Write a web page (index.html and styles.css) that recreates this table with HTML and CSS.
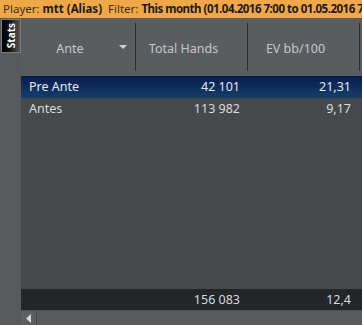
FILE: index.html
```html
<!DOCTYPE html>
<html>
<head>
<meta charset="utf-8">
<link rel="stylesheet" href="styles.css">
</head>
<body>
<div class="topbar">
  <span class="lbl">Player:</span> <b>mtt (Alias)</b>&nbsp;&nbsp;<span class="lbl">Filter:</span> <b class="flt">This month (01.04.2016 7:00 to 01.05.2016 7:00)</b>
</div>
<div class="main">
  <div class="side">
    <div class="tab"><span>Stats</span></div>
  </div>
  <div class="grid">
    <div class="head">
      <div class="hc c1"><span class="htxt">Ante</span><span class="arrow"></span></div>
      <div class="hc c2">Total Hands</div>
      <div class="hc c3">EV bb/100</div>
      <div class="hc c4"></div>
    </div>
    <div class="body">
      <div class="row sel">
        <div class="cell c1">Pre Ante</div>
        <div class="cell c2 num">42 101</div>
        <div class="cell c3 num">21,31</div>
      </div>
      <div class="row">
        <div class="cell c1">Antes</div>
        <div class="cell c2 num">113 982</div>
        <div class="cell c3 num">9,17</div>
      </div>
    </div>
    <div class="row total">
      <div class="cell c1"></div>
      <div class="cell c2 num">156 083</div>
      <div class="cell c3 num">12,4</div>
    </div>
    <div class="scroll">
      <div class="sbtn"><svg width="6" height="9" viewBox="0 0 6 9"><path d="M5 0 L5 9 L0 4.5 Z" fill="#d8dadc"/></svg></div>
      <div class="strack"></div>
    </div>
  </div>
</div>
</body>
</html>
```
FILE: styles.css
```css
* { box-sizing: border-box; }
html, body { margin: 0; padding: 0; }
body {
  width: 362px; height: 325px; overflow: hidden;
  background: #55585b;
  font-family: "Noto Sans", "Open Sans", sans-serif;
  font-size: 12px;
}
.topbar {
  height: 18px;
  background: #f0a847;
  color: #1d1a14;
  padding-left: 3px;
  line-height: 18px;
  white-space: nowrap;
  overflow: hidden;
  font-size: 11.5px;
}
.topbar .lbl { color: #3a2e1c; }
.topbar b { font-weight: 700; }
.topbar .flt { letter-spacing: -0.5px; }
.main { display: flex; height: 307px; }
.side {
  width: 21px;
  background: #57595c;
  padding-top: 1px;
  padding-left: 1px;
}
.tab {
  width: 20px; height: 34px;
  border: 1px solid #7b7e81;
  background: linear-gradient(to right, #000 0%, #111 40%, #555 100%);
  display: flex; align-items: center; justify-content: center;
}
.tab span {
  writing-mode: vertical-rl;
  transform: rotate(180deg);
  color: #fff;
  font-size: 10px;
  font-weight: 700;
  line-height: 1;
}
.grid { flex: 1; display: flex; flex-direction: column; }
.head {
  height: 58px;
  background: #5a5d60;
  display: flex;
  padding: 5px 0 5px 0;
}
.hc {
  display: flex; align-items: center; justify-content: center;
  color: #c5c7c9;
  font-size: 12.5px;
  border-right: 1px solid #2c2e30;
  padding-right: 16px;
  padding-top: 2px;
}
.head .c1 { position: relative; }
.c1 { width: 115px; }
.c2 { width: 112px; }
.c3 { width: 112px; }
.c4 { flex: 1; border-right: none; }
.arrow {
  position: absolute; right: 8px; top: 22px;
  width: 0; height: 0;
  border-left: 4px solid transparent;
  border-right: 4px solid transparent;
  border-top: 4px solid #d0d2d4;
}
.body { flex: 1; background: #46494c; }
.row { display: flex; height: 22px; line-height: 22px; color: #d8dadc; font-size: 12.5px; }
.row.sel { background: linear-gradient(to bottom, #061c4b, #163f6b); color: #e6e8ea; }
.cell { white-space: nowrap; }
.cell.c1 { padding-left: 8px; }
.cell.num { text-align: right; padding-right: 8px; }
.cell.c3 { padding-right: 9px; }
.row.total { background: #222629; height: 21px; line-height: 21px; }
.scroll { height: 15px; display: flex; background: #55585b; border-top: 1px solid #4b4e51; }
.sbtn {
  width: 16px; height: 14px;
  background: #5c5f62;
  border-right: 1px solid #45484b;
  display: flex; align-items: center; justify-content: center;
}
.strack { flex: 1; background: #595c5f; }
```
